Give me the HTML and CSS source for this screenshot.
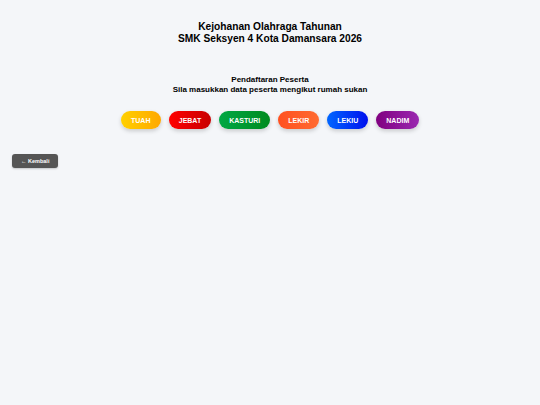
FILE: index.html
```html
<!DOCTYPE html>
<html lang="ms">
<head>
<meta charset="utf-8">
<title>Kejohanan Olahraga Tahunan</title>
<link rel="stylesheet" href="styles.css">
</head>
<body>
<header class="header">
  <h1 class="title">Kejohanan Olahraga Tahunan<br>SMK Seksyen 4 Kota Damansara 2026</h1>
</header>
<section class="intro">
  <h2 class="subtitle">Pendaftaran Peserta<br>Sila masukkan data peserta mengikut rumah sukan</h2>
  <nav class="houses">
    <a class="house tuah" href="#">TUAH</a>
    <a class="house jebat" href="#">JEBAT</a>
    <a class="house kasturi" href="#">KASTURI</a>
    <a class="house lekir" href="#">LEKIR</a>
    <a class="house lekiu" href="#">LEKIU</a>
    <a class="house nadim" href="#">NADIM</a>
  </nav>
</section>
<div class="back-row">
  <a class="back" href="#">← Kembali</a>
</div>
</body>
</html>
```

FILE: styles.css
```css
html, body {
  margin: 0;
  padding: 0;
}
body {
  background: #f4f6f9;
  font-family: "Liberation Sans", Arial, sans-serif;
  color: #000;
  width: 540px;
  min-height: 405px;
}
.header {
  padding-top: 21px;
  text-align: center;
}
.title {
  margin: 0;
  font-size: 10.2px;
  line-height: 11.5px;
  font-weight: bold;
}
.intro {
  padding-top: 31px;
  text-align: center;
}
.subtitle {
  margin: 0;
  font-size: 8px;
  line-height: 9.5px;
  font-weight: bold;
}
.houses {
  display: flex;
  justify-content: center;
  gap: 8px;
  margin-top: 17px;
}
.house {
  display: inline-flex;
  align-items: center;
  justify-content: center;
  height: 18px;
  padding: 0 10px;
  border-radius: 9px;
  color: #fff;
  font-size: 7px;
  font-weight: bold;
  text-decoration: none;
  box-shadow: 0 2px 4px rgba(0,0,0,0.18);
}
.tuah { background: linear-gradient(90deg, #ffd000, #ffa800); min-width: 20px; }
.jebat { background: linear-gradient(90deg, #ff0000, #c80000); }
.kasturi { background: linear-gradient(90deg, #00a845, #008a1e); }
.lekir { background: linear-gradient(90deg, #ff5020, #ff6a30); }
.lekiu { background: linear-gradient(90deg, #0066ff, #0010ee); }
.nadim { background: linear-gradient(90deg, #800080, #9a28b0); }
.back-row {
  padding: 20px 12px 0;
}
.back {
  display: inline-flex;
  align-items: center;
  height: 14px;
  padding: 0 9px;
  border-radius: 3px;
  background: #555;
  color: #fff;
  font-size: 5.5px;
  font-weight: bold;
  text-decoration: none;
  box-shadow: 0 1px 2px rgba(0,0,0,0.2);
}
```
